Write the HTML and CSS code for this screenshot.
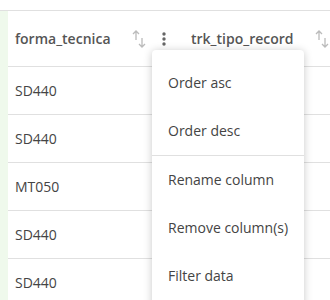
FILE: index.html
```html
<!DOCTYPE html>
<html lang="en">
<head>
    <meta charset="UTF-8">
    <meta name="viewport" content="width=device-width, initial-scale=1.0">
    <title>table</title>
    <link rel="stylesheet" href="styles.css">
</head>
<body>

    <div class="wrap">
        <table class="grid">
            <thead>
                <tr>
                    <th class="lead"></th>
                    <th>
                        <div class="head">
                            <span class="name">forma_tecnica</span>
                            <svg class="sort" width="14" height="19" viewBox="0 0 14 19"><path d="M4 10V1M1 4l3-3 3 3M10 8v9M7 14l3 3 3-3" fill="none" stroke="currentColor" stroke-width="1.3"/></svg>
                            <svg class="kebab" width="6" height="16" viewBox="0 0 6 16"><circle cx="3" cy="3" r="1.7"/><circle cx="3" cy="8" r="1.7"/><circle cx="3" cy="13" r="1.7"/></svg>
                        </div>
                    </th>
                    <th>
                        <div class="head">
                            <span class="name">trk_tipo_record</span>
                            <svg class="sort" width="14" height="19" viewBox="0 0 14 19"><path d="M4 10V1M1 4l3-3 3 3M10 8v9M7 14l3 3 3-3" fill="none" stroke="currentColor" stroke-width="1.3"/></svg>
                        </div>
                    </th>
                </tr>
            </thead>
            <tbody>
                <tr><td class="lead"></td><td>SD440</td><td></td></tr>
                <tr><td class="lead"></td><td>SD440</td><td></td></tr>
                <tr><td class="lead"></td><td>MT050</td><td></td></tr>
                <tr><td class="lead"></td><td>SD440</td><td></td></tr>
                <tr><td class="lead"></td><td>SD440</td><td></td></tr>
            </tbody>
        </table>

        <ul class="menu">
            <li>Order asc</li>
            <li>Order desc</li>
            <li class="sep"></li>
            <li>Rename column</li>
            <li>Remove column(s)</li>
            <li>Filter data</li>
        </ul>
    </div>

</body>
</html>
```

FILE: styles.css
```css
*{margin:0;padding:0;box-sizing:border-box;}
html,body{background:#fff;}
body{font-family:"Open Sans",sans-serif;font-size:14px;color:#444;}

.wrap{position:relative;width:330px;height:300px;overflow:hidden;padding-top:10px;}

.grid{border-collapse:collapse;table-layout:fixed;width:330px;border-top:1px solid #e0e0e0;}
.grid th,.grid td{border-bottom:1px solid #e0e0e0;text-align:left;white-space:nowrap;overflow:hidden;}
.grid th{height:56px;width:176px;padding:0 0 0 7px;font-weight:600;color:#555;}
.grid td{height:48px;padding:0 7px;}
.grid .lead{width:8px;padding:0;background-color:#eff9ec;border-bottom:none;}

.head{display:flex;align-items:center;}
.head .sort{margin-left:21px;margin-top:2px;color:#bbb;flex:none;}
.head .kebab{margin-left:15px;fill:#666;flex:none;}

.menu{position:absolute;top:50px;left:152px;width:152px;height:260px;padding-top:9px;list-style:none;background:#fff;border-radius:4px;box-shadow:0 1px 8px rgba(0,0,0,.22);}
.menu li{height:48px;line-height:48px;padding-left:16px;color:#444;}
.menu .sep{height:1px;background:#e0e0e0;}
```
